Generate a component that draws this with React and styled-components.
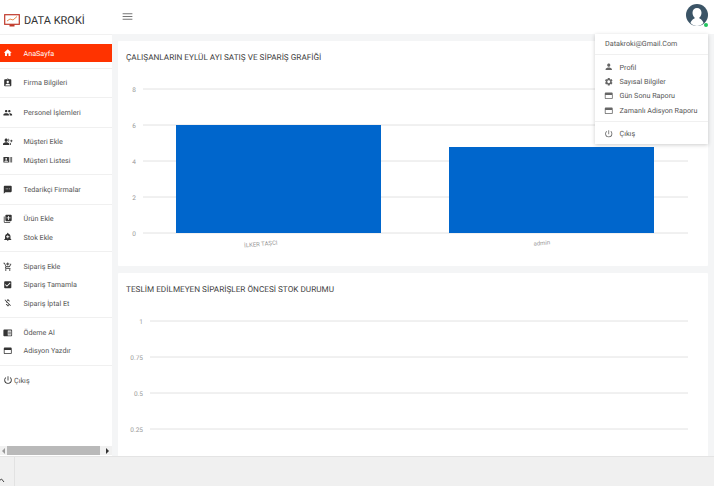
import React from "react";
import styled, { createGlobalStyle } from "styled-components";
import {
  MdHome, MdAssignmentInd, MdPeople, MdGroupAdd, MdRecentActors, MdSms, MdLibraryAdd,
  MdAddAlert, MdAddShoppingCart, MdCheckBox, MdMoneyOff, MdChromeReaderMode,
  MdPowerSettingsNew, MdMenu, MdPerson, MdSettings,
} from "react-icons/md";

const Global = createGlobalStyle`
  html, body { margin: 0; padding: 0; }
  body { width: 714px; height: 486px; overflow: hidden; font-family: Roboto, "Noto Sans", sans-serif; background: #f4f5f6; text-rendering: geometricPrecision; }
`;

const Page = styled.div`
  position: relative;
  width: 714px;
  height: 486px;
  display: grid;
  grid-template-columns: 112px 1fr;
  grid-template-rows: 34px 422px 30px;
  overflow: hidden;
`;

const Brand = styled.div`
  background: #fff;
  display: flex;
  align-items: center;
  gap: 4px;
  padding: 6px 0 0 4px;
  color: #333;
  font-size: 11px;
`;

const Topbar = styled.header`
  background: #fff;
  display: flex;
  align-items: flex-start;
  justify-content: space-between;
  padding: 10px 6px 0 9px;
  color: #777;
`;

const Side = styled.aside`
  background: #fff;
  display: flex;
  flex-direction: column;
  border-top: 1px solid #f1f1f1;
  position: relative;
  padding-top: 9px;
`;

const Group = styled.div`
  display: flex;
  flex-direction: column;
  border-bottom: ${(p) => (p.$last ? "none" : "1px solid #f0f0f0")};
  padding: ${(p) => p.$pad || "5.05px 0"};
`;

const Item = styled.div`
  height: 18.3px;
  display: flex;
  align-items: center;
  gap: 11px;
  padding-left: 3px;
  font-size: 7.2px;
  color: ${(p) => (p.$active ? "#fff" : "#555")};
  background: ${(p) => (p.$active ? "#ff3300" : "transparent")};
  svg { color: ${(p) => (p.$active ? "#fff" : "#333")}; flex: none; }
`;

const Exit = styled(Item)`
  gap: 1px;
`;

const Scrollbar = styled.div`
  position: absolute;
  left: 0;
  right: 0;
  bottom: 1px;
  height: 9px;
  display: flex;
  align-items: center;
  background: #f1f1f1;
  justify-content: space-between;
`;

const Thumb = styled.div`
  position: absolute;
  left: 7px;
  width: 93px;
  height: 9px;
  background: #b9b9b9;
`;

const Arrow = styled.span`
  width: 0;
  height: 0;
  margin: 0 ${(p) => (p.$right ? "3px" : "2px")};
  border-top: 3px solid transparent;
  border-bottom: 3px solid transparent;
  ${(p) => (p.$right ? "border-left: 3px solid #333;" : "border-right: 3px solid #999;")}
`;

const Main = styled.main`
  padding: 7px 6px 0;
  display: flex;
  flex-direction: column;
  gap: 7px;
  overflow: hidden;
`;

const Card = styled.section`
  background: #fff;
  height: ${(p) => p.$h}px;
  flex: none;
  padding: 11px 8px 0;
  box-sizing: border-box;
  border-radius: 1px;
  overflow: hidden;
`;

const CardTitle = styled.h2`
  margin: 0;
  font-size: 8.2px;
  line-height: 12px;
  font-weight: 400;
  color: #444;
`;

const Chart = styled.svg`
  display: block;
  margin-left: -8px;
  text { font-family: Roboto, sans-serif; fill: #999; font-size: 6.5px; }
`;

const Footer = styled.footer`
  grid-column: 1 / 3;
  background: #f0f0f0;
  border-top: 1px solid #e4e4e4;
  display: flex;
  align-items: center;
  color: #444;
`;

const FootCell = styled.div`
  width: 15px;
  height: 100%;
  border-right: 1px solid #e2e2e2;
  padding-top: 12px;
  box-sizing: border-box;
`;

const Avatar = styled.div`
  position: relative;
  width: 22px;
  height: 22px;
  margin-top: -6px;
`;

const Dot = styled.span`
  position: absolute;
  right: 0;
  bottom: -1px;
  width: 4px;
  height: 4px;
  background: #22c55e;
  border-radius: 50%;
`;

const Menu = styled.div`
  position: absolute;
  left: 595px;
  top: 34px;
  width: 113px;
  height: 110px;
  background: #fff;
  box-shadow: 0 1px 4px rgba(0,0,0,.2);
  font-size: 7.2px;
  color: #555;
  display: flex;
  flex-direction: column;
`;

const MenuHead = styled.div`
  height: 21px;
  padding: 0 10px 2px;
  box-sizing: border-box;
  display: flex;
  align-items: center;
  border-bottom: 1px solid #f0f0f0;
  color: #555;
`;

const MenuList = styled.div`
  padding: 5px 0 3.5px;
  border-bottom: 1px solid #f0f0f0;
`;

const MenuItem = styled.div`
  height: 14.4px;
  display: flex;
  align-items: center;
  gap: 6px;
  padding-left: 9px;
  svg { color: #666; flex: none; }
`;

const MenuExit = styled(MenuItem)`
  margin-top: 4.5px;
`;

const Logo = () => (
  <svg width="16" height="13" viewBox="0 0 16 13">
    <rect x="0.7" y="0.7" width="14.6" height="9.6" fill="#fff" stroke="#c0392b" strokeWidth="1.2" />
    <path d="M3 7 L6 5 L9 6 L13 2.500" fill="none" stroke="#e58a4e" strokeWidth="1" />
    <rect x="5.500" y="10.500" width="5" height="2" fill="#c0392b" />
  </svg>
);

const CardIcon = ({ size }) => (
  <svg width={size} height={size} viewBox="0 0 24 24" fill="currentColor">
    <path d="M20 4H4c-1.100 0-2 .9-2 2v12c0 1.100.9 2 2 2h16c1.100 0 2-.9 2-2V6c0-1.100-.9-2-2-2zm0 14H4v-8h16z" />
  </svg>
);

const groups = [
  { items: [["AnaSayfa", MdHome, true]], pad: "0 0 5.5px" },
  { items: [["Firma Bilgileri", MdAssignmentInd]] },
  { items: [["Personel İşlemleri", MdPeople]] },
  { items: [["Müşteri Ekle", MdGroupAdd], ["Müşteri Listesi", MdRecentActors]] },
  { items: [["Tedarikçi Firmalar", MdSms]] },
  { items: [["Ürün Ekle", MdLibraryAdd], ["Stok Ekle", MdAddAlert]] },
  { items: [["Sipariş Ekle", MdAddShoppingCart], ["Sipariş Tamamla", MdCheckBox], ["Sipariş İptal Et", MdMoneyOff]] },
  { items: [["Ödeme Al", MdChromeReaderMode], ["Adisyon Yazdır", CardIcon]] },
];

const menu = [
  ["Profil", MdPerson],
  ["Sayısal Bilgiler", MdSettings],
  ["Gün Sonu Raporu", CardIcon],
  ["Zamanlı Adisyon Raporu", CardIcon],
];

export default function App() {
  return (
    <Page>
      <Global />
      <Brand><Logo />DATA KROKİ</Brand>
      <Topbar>
        <MdMenu size={13} />
        <Avatar>
          <svg width="22" height="22" viewBox="0 0 22 22">
            <circle cx="11" cy="11" r="11" fill="#3b5466" />
            <path d="M4.5 19c1-3.5 3.5-4 4.5-5-1.5-1-2.5-3-2.5-5.200C6.500 6 8.500 4 11 4s4.500 2 4.500 4.800c0 2.200-1 4.200-2.500 5.200 1 1 3.500 1.500 4.500 5-1.700 1.800-4 3-6.500 3s-4.800-1.200-6.500-3z" fill="#fff" />
          </svg>
          <Dot />
        </Avatar>
      </Topbar>
      <Side>
        {groups.map((g, i) => (
          <Group key={i} $pad={g.pad}>
            {g.items.map(([t, I, a]) => (
              <Item key={t} $active={a}><I size={9.5} />{t}</Item>
            ))}
          </Group>
        ))}
        <Group $last>
          <Exit><MdPowerSettingsNew size={10} />Çıkış</Exit>
        </Group>
        <Scrollbar>
          <Arrow />
          <Thumb />
          <Arrow $right />
        </Scrollbar>
      </Side>
      <Main>
        <Card $h={225}>
          <CardTitle>ÇALIŞANLARIN EYLÜL AYI SATIŞ VE SİPARİŞ GRAFİĞİ</CardTitle>
          <Chart width="590" height="202" viewBox="118 64 590 202">
            {[[8, 89], [6, 125], [4, 161], [2, 197], [0, 233]].map(([v, y]) => (
              <g key={v}>
                <line x1="143" x2="688" y1={y} y2={y} stroke="#e2e2e2" strokeWidth="1" />
                <text x="134" y={y + 2.5} textAnchor="middle">{v}</text>
              </g>
            ))}
            <rect x="176" y="125" width="205" height="108" fill="#0066cc" />
            <rect x="449" y="147" width="205" height="86" fill="#0066cc" />
            <text transform="translate(261 246) rotate(-5)" textAnchor="middle" style={{ fontSize: 6 }}>İLKER TAŞCI</text>
            <text transform="translate(542 245) rotate(-5)" textAnchor="middle" style={{ fontSize: 6 }}>admin</text>
          </Chart>
        </Card>
        <Card $h={200}>
          <CardTitle>TESLİM EDİLMEYEN SİPARİŞLER ÖNCESİ STOK DURUMU</CardTitle>
          <Chart width="590" height="165" viewBox="118 296 590 165">
            {[["1", 321], ["0.75", 357], ["0.5", 393], ["0.25", 429]].map(([v, y]) => (
              <g key={v}>
                <line x1="150" x2="688" y1={y} y2={y} stroke="#e2e2e2" strokeWidth="1" />
                <text x="143" y={y + 2.5} textAnchor="end">{v}</text>
              </g>
            ))}
          </Chart>
        </Card>
      </Main>
      <Footer>
        <FootCell>
          <svg width="6" height="6" viewBox="0 0 6 6"><path d="M-1 3 L1.500 1 L4 4" fill="none" stroke="#444" strokeWidth="1" /></svg>
        </FootCell>
      </Footer>
      <Menu>
        <MenuHead>Datakroki@Gmail.Com</MenuHead>
        <MenuList>
          {menu.map(([t, I]) => (
            <MenuItem key={t}><I size={9.5} />{t}</MenuItem>
          ))}
        </MenuList>
        <MenuExit><MdPowerSettingsNew size={9.5} />Çıkış</MenuExit>
      </Menu>
    </Page>
  );
}
